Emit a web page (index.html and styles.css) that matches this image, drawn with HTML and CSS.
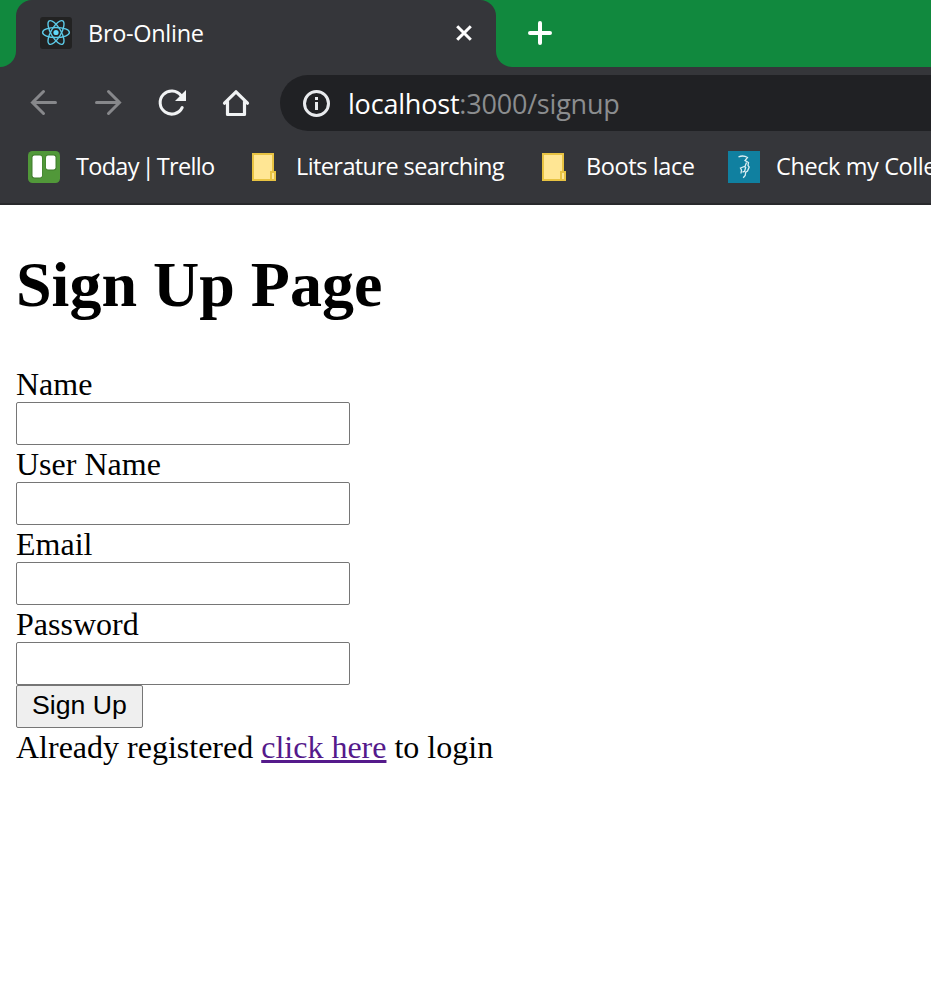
FILE: index.html
```html
<!DOCTYPE html>
<html lang="en">
<head>
<meta charset="utf-8">
<title>Bro-Online</title>
<link rel="stylesheet" href="styles.css">
</head>
<body>
<header class="browser">
  <div class="tabstrip">
    <div class="strip-left"></div>
    <div class="tab">
      <svg class="favicon" width="32" height="32" viewBox="0 0 32 32">
        <rect width="32" height="32" rx="3" fill="#222"/>
        <g fill="none" stroke="#5ccbe8" stroke-width="1.4">
          <ellipse cx="16" cy="15.5" rx="13.4" ry="5"/>
          <ellipse cx="16" cy="15.5" rx="13.4" ry="5" transform="rotate(60 16 15.5)"/>
          <ellipse cx="16" cy="15.5" rx="13.4" ry="5" transform="rotate(120 16 15.5)"/>
        </g>
        <circle cx="16" cy="15.5" r="2.6" fill="#61dafb"/>
      </svg>
      <span class="tab-title">Bro-Online</span>
      <svg class="close" width="16" height="16" viewBox="0 0 16 16"><path d="M1.2 1.2 14.8 14.8M14.8 1.2 1.2 14.8" stroke="#fff" stroke-width="3"/></svg>
    </div>
    <div class="strip-right">
      <svg width="24" height="24" viewBox="0 0 24 24"><path d="M12 2v20M2 12h20" stroke="#fff" stroke-width="4" stroke-linecap="round"/></svg>
    </div>
  </div>
  <div class="toolbar">
    <div class="nav">
      <svg width="32" height="32" viewBox="0 0 32 32"><path d="M27.500 15.500H4.500M15.500 4.500 4.500 15.500 15.500 26.500" fill="none" stroke="#87888b" stroke-width="3" stroke-linecap="round"/></svg>
      <svg width="32" height="32" viewBox="0 0 32 32"><path d="M4.500 15.500h23M16.500 4.500 27.500 15.500 16.500 26.500" fill="none" stroke="#87888b" stroke-width="3" stroke-linecap="round"/></svg>
      <svg width="32" height="32" viewBox="0 0 32 32"><path d="M26.200 20.500A11.600 11.600 0 1 1 25 8.500" fill="none" stroke="#f1f3f4" stroke-width="3" stroke-linecap="round"/><path d="M30 3v11H19z" fill="#f1f3f4"/></svg>
      <svg width="32" height="32" viewBox="0 0 32 32"><path d="M4.500 16.200 16 4.800l11.500 11.400M7.500 14.500V27.500h17V14.500" fill="none" stroke="#f1f3f4" stroke-width="3.200" stroke-linecap="round" stroke-linejoin="round"/></svg>
    </div>
    <div class="omnibox">
      <svg width="28" height="28" viewBox="0 0 28 28"><circle cx="14.500" cy="14.500" r="12" fill="none" stroke="#e8eaed" stroke-width="3"/><path d="M13 8h3v3h-3zM13 13h3v8h-3z" fill="#e8eaed"/></svg>
      <span class="url"><span class="host">localhost</span>:3000/signup</span>
    </div>
  </div>
  <div class="bookmarks">
    <div class="bookmark trello">
      <svg width="32" height="32" viewBox="0 0 32 32"><rect width="32" height="32" rx="4.500" fill="#519839"/><rect x="3.500" y="3.500" width="11" height="24" rx="3" fill="#3f7b2c"/><rect x="17.500" y="3.500" width="11" height="16" rx="3" fill="#3f7b2c"/><rect x="4.500" y="4.500" width="9.500" height="22" rx="2" fill="#fff"/><rect x="18" y="4.500" width="9.500" height="14" rx="2" fill="#fff"/></svg>
      <span>Today | Trello</span>
    </div>
    <div class="bookmark literature">
      <svg width="32" height="32" viewBox="0 0 32 32"><path d="M5 3h20v18h2v8H5z" fill="#ffe694" stroke="#e8c342" stroke-width="2"/><path d="M23 29v-8h2" fill="none" stroke="#e8c342" stroke-width="2"/></svg>
      <span>Literature searching</span>
    </div>
    <div class="bookmark boots">
      <svg width="32" height="32" viewBox="0 0 32 32"><path d="M5 3h20v18h2v8H5z" fill="#ffe694" stroke="#e8c342" stroke-width="2"/><path d="M23 29v-8h2" fill="none" stroke="#e8c342" stroke-width="2"/></svg>
      <span>Boots lace</span>
    </div>
    <div class="bookmark college">
      <svg width="32" height="32" viewBox="0 0 32 32"><rect width="32" height="32" fill="#1080a0"/><path d="M10.500 5.800C14 4.500 18 5.500 19.500 6.500L17 9.500l3.500 2-.5 3 1.200 1.500-1.700 4-1.800 1.200-.5 3.300-2 2.200M18.500 11.500l-1.500 4M13 22.500l.5-3.500-1-2 4-1.500 1.200 1-1.200 4-2 .5" fill="none" stroke="#d9edf2" stroke-width="1.300"/></svg>
      <span>Check my Colle</span>
    </div>
  </div>
</header>
<main class="page">
  <h1>Sign Up Page</h1>
  <form class="signup">
    <label for="name">Name</label>
    <input id="name" type="text">
    <label for="username">User Name</label>
    <input id="username" type="text">
    <label for="email">Email</label>
    <input id="email" type="email">
    <label for="password">Password</label>
    <input id="password" type="password">
    <button type="button">Sign Up</button>
  </form>
  <p class="login">Already registered <a href="#">click here</a> to login</p>
</main>
</body>
</html>
```
FILE: styles.css
```css
* { box-sizing: border-box; }
body {
  margin: 0;
  background: #fff;
  color: #000;
  font: 32px/37px "Liberation Serif", serif;
  overflow: hidden;
}
svg { display: block; flex: none; }
.browser {
  height: 205px;
  background: #35363a;
  border-bottom: 2px solid #28292c;
  color: #fff;
  font: 23.5px/30px "Open Sans", sans-serif;
  white-space: nowrap;
  overflow: hidden;
}
.tabstrip {
  display: flex;
  height: 67px;
  background: linear-gradient(#11893e 0 32px, #35363a 32px);
}
.strip-left { width: 16px; background: #11893e; border-bottom-right-radius: 16px; }
.tab {
  display: flex;
  align-items: center;
  width: 480px;
  padding: 0 24px 2px;
  background: #35363a;
  border-radius: 16px 16px 0 0;
}
.favicon { margin-right: 16px; }
.close { margin-left: auto; }
.strip-right {
  flex: 1;
  display: flex;
  align-items: center;
  padding: 0 0 1px 32px;
  background: #11893e;
  border-bottom-left-radius: 16px;
}
.tab-title { letter-spacing: -0.3px; }
.toolbar { display: flex; padding-top: 8px; height: 64px; }
.nav { display: flex; gap: 32px; padding: 12px 28px 0; width: 280px; }
.omnibox {
  flex: 1;
  display: flex;
  align-items: center;
  gap: 18px;
  height: 56px;
  padding-left: 22px;
  background: #202124;
  border-radius: 28px 0 0 28px;
}
.url { font-size: 27px; color: #8b8d8f; letter-spacing: -0.2px; padding-top: 1px; }
.host { color: #fff; }
.bookmarks { display: flex; padding: 20px 0 0 28px; }
.bookmark { display: flex; flex: none; gap: 16px; letter-spacing: -0.4px; }
.trello { width: 220px; letter-spacing: -0.7px; word-spacing: -2.5px; }
.literature { width: 290px; letter-spacing: -0.6px; }
.boots { width: 190px; }
.page { padding: 43px 16px 0; }
h1 { margin: 0 0 44px; font-size: 64px; line-height: 74px; }
.signup { display: flex; flex-direction: column; align-items: flex-start; }
.signup label { height: 36px; }
.signup input {
  width: 334px;
  height: 43px;
  margin-bottom: 1px;
  border: 1px solid #767676;
  border-radius: 2px;
  background: #fff;
}
.signup button {
  width: 127px;
  height: 43px;
  margin-top: -1px;
  padding: 0 0 2px;
  border: 1px solid #767676;
  border-radius: 2px;
  background: #efefef;
  color: #000;
  font: 26.67px/39px "Liberation Sans", sans-serif;
}
.login { margin: 1px 0 0; }
.login a {
  color: #551a8b;
  text-decoration-thickness: 3px;
  text-underline-offset: 2px;
}
```
